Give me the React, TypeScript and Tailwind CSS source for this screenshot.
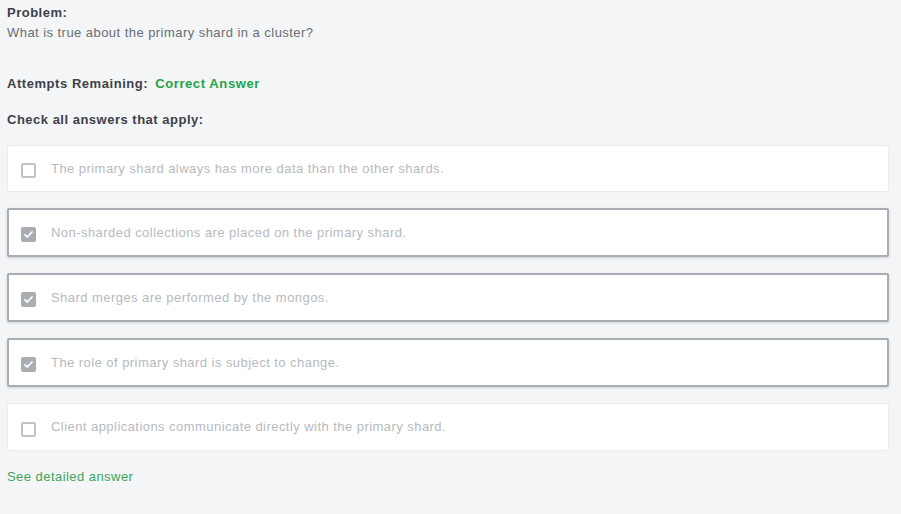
import React from "react";

const options = [
  { text: "The primary shard always has more data than the other shards.", checked: false },
  { text: "Non-sharded collections are placed on the primary shard.", checked: true },
  { text: "Shard merges are performed by the mongos.", checked: true },
  { text: "The role of primary shard is subject to change.", checked: true },
  { text: "Client applications communicate directly with the primary shard.", checked: false },
];

function Box({ checked }: { checked: boolean }) {
  if (checked) {
    return (
      <span className="flex h-[15px] w-[15px] shrink-0 items-center justify-center rounded-[2px] bg-[#a9adb3] translate-y-[2px]">
        <svg width="11" height="11" viewBox="0 0 11 11" fill="none">
          <path d="M2 5.8 L4.4 8 L9 3" stroke="white" strokeWidth="1.8" strokeLinecap="round" strokeLinejoin="round" />
        </svg>
      </span>
    );
  }
  return (
    <span className="block h-[15px] w-[15px] shrink-0 rounded-[2px] border-2 border-[#bfc2c6] bg-white translate-y-[2px]" />
  );
}

export default function App() {
  return (
    <div
      className="h-[514px] w-[901px] bg-[#f4f5f7] pl-[7px] pr-[12px] pt-[3px] text-[13px]"
      style={{ fontFamily: '"Liberation Sans", Arial, sans-serif' }}
    >
      <p className="font-bold leading-[20px] text-[#3e4147] tracking-[0.5px]">Problem:</p>
      <p className="leading-[20px] text-[#6a6e73] tracking-[0.45px]">
        What is true about the primary shard in a cluster?
      </p>

      <p className="mt-[31px] leading-[20px] font-bold text-[#3e4147] tracking-[0.55px]">
        Attempts Remaining:<span className="ml-[7px] text-[#21a34b] tracking-[0.6px]">Correct Answer</span>
      </p>

      <p className="mt-[16px] leading-[20px] font-bold text-[#3e4147] tracking-[0.5px]">
        Check all answers that apply:
      </p>

      <div className="mt-[15px] flex flex-col gap-[16px]">
        {options.map((o, i) => (
          <div
            key={i}
            className={
              o.checked
                ? "flex h-[49px] items-center gap-[15px] rounded-[2px] border-[2px] border-[#a9aeb4] bg-white pl-[12px] shadow-[0_1px_3px_rgba(0,0,0,0.15)]"
                : i === 0
                ? "flex h-[47px] items-center gap-[15px] rounded-[2px] border border-[#e9ebee] bg-white pl-[13px]"
                : "flex h-[48px] items-center gap-[15px] rounded-[2px] border border-[#e9ebee] bg-white pl-[13px]"
            }
          >
            <Box checked={o.checked} />
            <span className="text-[#b6babf] tracking-[0.45px]">{o.text}</span>
          </div>
        ))}
      </div>

      <p className="mt-[16px] leading-[20px] text-[#3fa45c] tracking-[0.45px]">See detailed answer</p>
    </div>
  );
}
